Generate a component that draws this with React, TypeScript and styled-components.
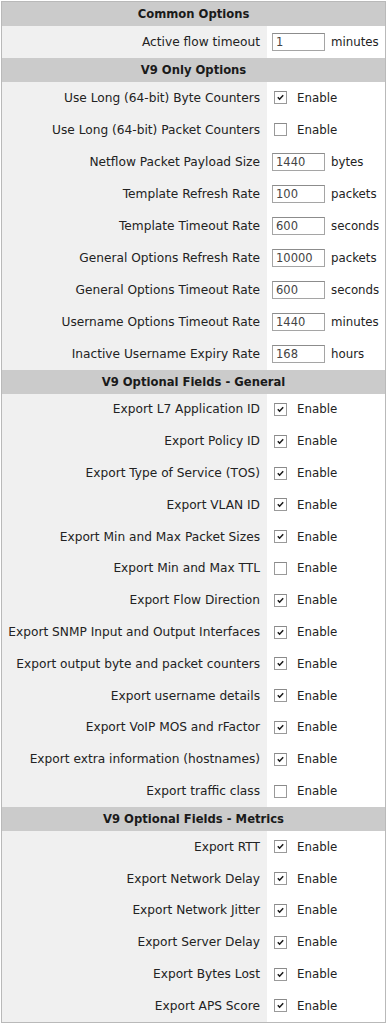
import React from "react";
import styled, { createGlobalStyle } from "styled-components";

const GlobalStyle = createGlobalStyle`
  html, body {
    margin: 0;
    padding: 0;
    background: #ffffff;
  }
  body {
    font-family: "DejaVu Sans", Verdana, sans-serif;
    color: #222222;
  }
`;

const Page = styled.div`
  padding: 1px 0 0 1px;
  width: 386px;
`;

const Table = styled.div`
  border: 1px solid #b9b9b9;
  width: 385px;
  box-sizing: border-box;
  background: #f0f0f0;
`;

const SectionHeader = styled.div`
  height: 24px;
  background: #cbcbcb;
  display: flex;
  align-items: center;
  justify-content: center;
  font-size: 11.6px;
  font-weight: bold;
  color: #1a1a1a;
`;

const Row = styled.div<{ $tall?: boolean }>`
  display: grid;
  grid-template-columns: 265px 1fr;
  height: ${({ $tall }) => ($tall ? "32px" : "31.8px")};
`;

const Label = styled.div`
  display: flex;
  align-items: center;
  justify-content: flex-end;
  padding-right: 7px;
  font-size: 12.2px;
  white-space: nowrap;
  color: #222222;
`;

const Value = styled.div`
  background: #ffffff;
  display: flex;
  align-items: center;
  padding-left: 5px;
  font-size: 11.8px;
  white-space: nowrap;
`;

const TextBox = styled.div`
  width: 53px;
  height: 18px;
  box-sizing: border-box;
  border: 1px solid #a5a5a5;
  border-top-color: #8c8c8c;
  background: #ffffff;
  padding-left: 3px;
  display: flex;
  align-items: center;
  font-size: 11.5px;
  color: #444444;
  margin-right: 6px;
`;

const CheckBox = styled.span`
  width: 13px;
  height: 13px;
  box-sizing: border-box;
  border: 1px solid #9a9a9a;
  border-top-color: #8a8a8a;
  background: #ffffff;
  margin-left: 2px;
  margin-right: 10px;
  display: inline-flex;
  align-items: center;
  justify-content: center;
`;

type Field =
  | { label: string; kind: "check"; checked: boolean }
  | { label: string; kind: "text"; value: string; unit: string };

type Section = { title: string; fields: Field[] };

const chk = (label: string, checked = true): Field => ({
  label,
  kind: "check",
  checked,
});
const txt = (label: string, value: string, unit: string): Field => ({
  label,
  kind: "text",
  value,
  unit,
});

const sections: Section[] = [
  {
    title: "Common Options",
    fields: [txt("Active flow timeout", "1", "minutes")],
  },
  {
    title: "V9 Only Options",
    fields: [
      chk("Use Long (64-bit) Byte Counters"),
      chk("Use Long (64-bit) Packet Counters", false),
      txt("Netflow Packet Payload Size", "1440", "bytes"),
      txt("Template Refresh Rate", "100", "packets"),
      txt("Template Timeout Rate", "600", "seconds"),
      txt("General Options Refresh Rate", "10000", "packets"),
      txt("General Options Timeout Rate", "600", "seconds"),
      txt("Username Options Timeout Rate", "1440", "minutes"),
      txt("Inactive Username Expiry Rate", "168", "hours"),
    ],
  },
  {
    title: "V9 Optional Fields - General",
    fields: [
      chk("Export L7 Application ID"),
      chk("Export Policy ID"),
      chk("Export Type of Service (TOS)"),
      chk("Export VLAN ID"),
      chk("Export Min and Max Packet Sizes"),
      chk("Export Min and Max TTL", false),
      chk("Export Flow Direction"),
      chk("Export SNMP Input and Output Interfaces"),
      chk("Export output byte and packet counters"),
      chk("Export username details"),
      chk("Export VoIP MOS and rFactor"),
      chk("Export extra information (hostnames)"),
      chk("Export traffic class", false),
    ],
  },
  {
    title: "V9 Optional Fields - Metrics",
    fields: [
      chk("Export RTT"),
      chk("Export Network Delay"),
      chk("Export Network Jitter"),
      chk("Export Server Delay"),
      chk("Export Bytes Lost"),
      chk("Export APS Score"),
    ],
  },
];

// small tick like the classic windows checkbox
const Tick = () => (
  <svg width="7" height="7" viewBox="0 0 7 7">
    <path d="M0.8 3.2 L2.6 5.2 L6.2 1.2" fill="none" stroke="#1a1a1a" strokeWidth="1.5" />
  </svg>
);

const FieldRow: React.FC<{ field: Field }> = ({ field }) => (
  <Row $tall={field.kind === "text"}>
    <Label>{field.label}</Label>
    <Value>
      {field.kind === "text" ? (
        <>
          <TextBox>{field.value}</TextBox>
          {field.unit}
        </>
      ) : (
        <>
          <CheckBox>{field.checked && <Tick />}</CheckBox>
          Enable
        </>
      )}
    </Value>
  </Row>
);

export default function App() {
  return (
    <Page>
      <GlobalStyle />
      <Table>
        {sections.map((s) => (
          <React.Fragment key={s.title}>
            <SectionHeader>{s.title}</SectionHeader>
            {s.fields.map((f) => (
              <FieldRow key={f.label} field={f} />
            ))}
          </React.Fragment>
        ))}
      </Table>
    </Page>
  );
}
